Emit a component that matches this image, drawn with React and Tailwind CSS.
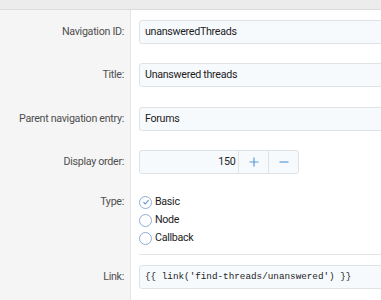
import React from "react";

const font = { fontFamily: 'Roboto, "Noto Sans", sans-serif' };

function Row({ label, children, className = "", labelClass = "" }) {
  return (
    <div className={"flex " + className}>
      <div className={"w-[131px] shrink-0 bg-[#f5f5f5] border-r border-[#e5e5e5] pr-[6px] text-right text-[10.7px] tracking-[-0.3px] text-[#4f4f4f] whitespace-nowrap " + labelClass}>
        {label}
      </div>
      <div className="flex-1 min-w-0 overflow-hidden pl-[8px]">{children}</div>
    </div>
  );
}

function TextInput({ value, mono }) {
  return (
    <div
      className={
        "h-[24px] w-[300px] rounded-[3px] border border-[#e0e3e6] bg-[#f7fafd] pl-[5px] flex items-center text-[#1d1d1d] whitespace-nowrap " +
        (mono ? "font-['Liberation_Mono',monospace] text-[9.3px]" : "text-[10.7px] tracking-[-0.3px]")
      }
    >
      {value}
    </div>
  );
}

function Radio({ label, checked }) {
  return (
    <div className="h-[18px] flex items-center gap-[3px] text-[10.7px] tracking-[-0.3px] text-[#1d1d1d]">
      <span className="w-[13px] h-[13px] rounded-full border border-[#8cb0d6] bg-white flex items-center justify-center">
        {checked && (
          <svg width="8" height="8" viewBox="0 0 8 8">
            <path d="M1.5 4.2 L3.3 6 L6.6 2" fill="none" stroke="#5b8fc7" strokeWidth="1.1" />
          </svg>
        )}
      </span>
      <span>{label}</span>
    </div>
  );
}

export default function App() {
  return (
    <div className="w-[381px] h-[300px] overflow-hidden bg-white flex flex-col" style={font}>
      <div className="h-[10px] shrink-0 bg-[#ececec] border-b border-[#dcdcdc]" />
      <Row label="Navigation ID:" className="h-[43px]" labelClass="pt-[10px] leading-[24px]">
        <div className="pt-[10px]"><TextInput value="unansweredThreads" /></div>
      </Row>
      <Row label="Title:" className="h-[44px]" labelClass="pt-[10px] leading-[24px]">
        <div className="pt-[10px]"><TextInput value="Unanswered threads" /></div>
      </Row>
      <Row label="Parent navigation entry:" className="h-[43px]" labelClass="pt-[10px] leading-[24px]">
        <div className="pt-[10px]"><TextInput value="Forums" /></div>
      </Row>
      <Row label="Display order:" className="h-[43px]" labelClass="pt-[10px] leading-[24px]">
        <div className="pt-[10px]">
          <div className="flex h-[24px] w-[160px] rounded-[3px] border border-[#e0e3e6] bg-[#f7fafd] text-[10.7px] tracking-[-0.3px] text-[#1d1d1d]">
            <div className="w-[99px] pr-[3px] flex items-center justify-end">150</div>
            <div className="w-[30px] border-l border-[#e0e3e6] flex items-center justify-center">
              <svg width="10" height="10" viewBox="0 0 10 10">
                <path d="M5 0.5 V9.5 M0.5 5 H9.5" stroke="#5b9bd8" strokeWidth="1.2" />
              </svg>
            </div>
            <div className="w-[30px] border-l border-[#e0e3e6] flex items-center justify-center">
              <svg width="10" height="10" viewBox="0 0 10 10">
                <path d="M0.5 5 H9.5" stroke="#5b9bd8" strokeWidth="1.2" />
              </svg>
            </div>
          </div>
        </div>
      </Row>
      <Row label="Type:" className="h-[72px]" labelClass="pt-[10px] leading-[18px]">
        <div className="pt-[10px] border-b border-[#e5e5e5] h-full">
          <Radio label="Basic" checked />
          <Radio label="Node" />
          <Radio label="Callback" />
        </div>
      </Row>
      <Row label="Link:" className="flex-1" labelClass="pt-[10px] leading-[24px]">
        <div className="pt-[10px]"><TextInput value="{{ link('find-threads/unanswered') }}" mono /></div>
      </Row>
    </div>
  );
}
